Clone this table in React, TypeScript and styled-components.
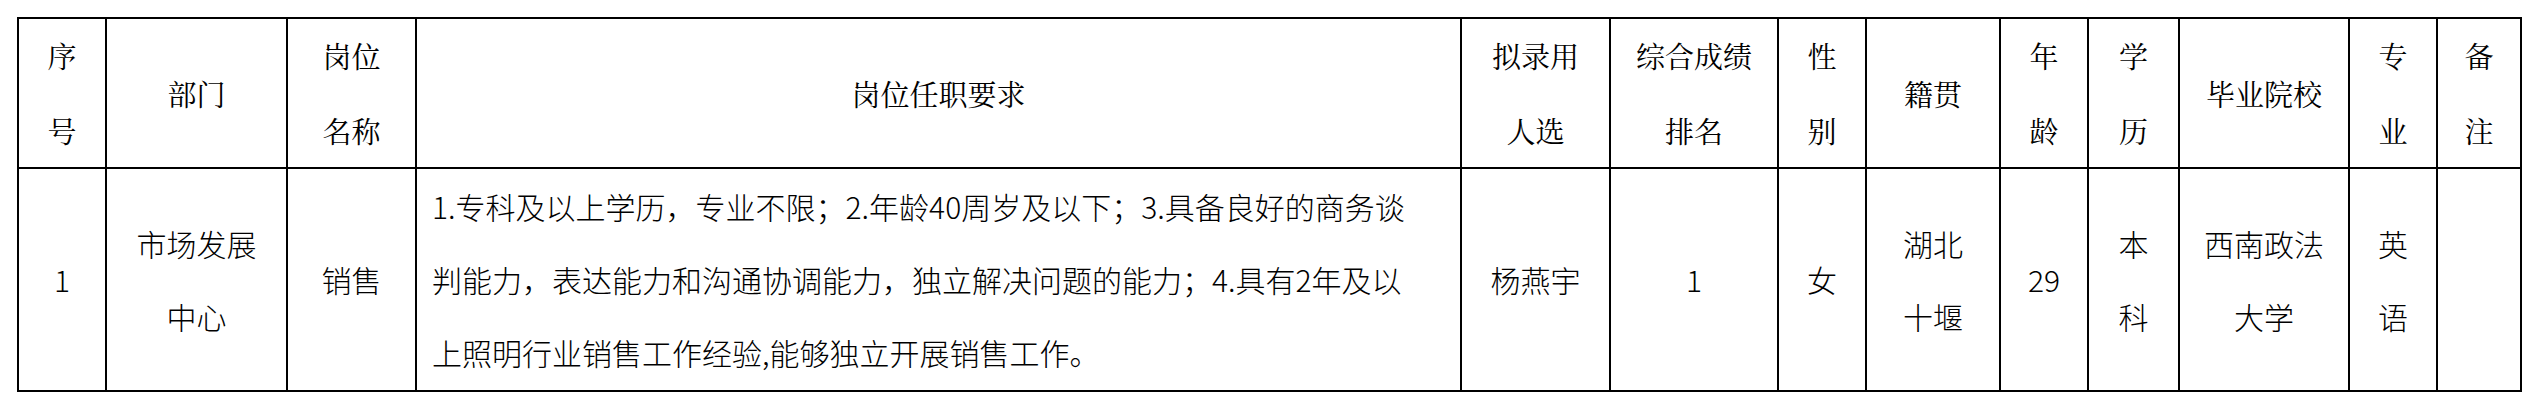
import styled, { createGlobalStyle } from 'styled-components';

const GlobalStyle = createGlobalStyle`
  html, body {
    margin: 0;
    padding: 0;
    background: #ffffff;
  }
`;

const Page = styled.div`
  padding: 17px;
  background: #ffffff;
`;

// grid with black background + 2px gaps draws the ruled lines
const Table = styled.div`
  display: grid;
  grid-template-columns: 86px 179px 127px 1043px 147px 166px 86px 132px 86px 89px 168px 86px 82px;
  grid-template-rows: 148px 221px;
  gap: 2px;
  padding: 2px;
  width: fit-content;
  background: #000000;
`;

const HeadCell = styled.div`
  display: flex;
  align-items: center;
  justify-content: center;
  text-align: center;
  background: #ffffff;
  color: #000000;
  font-family: 'Noto Serif CJK SC', 'AR PL UMing CN', 'Noto Sans CJK SC', serif;
  font-size: 29px;
  font-weight: 400;
  line-height: 75px;
  white-space: nowrap;
`;

const BodyCell = styled.div<{ $left?: boolean }>`
  display: flex;
  align-items: center;
  justify-content: ${({ $left }) => ($left ? 'flex-start' : 'center')};
  text-align: ${({ $left }) => ($left ? 'left' : 'center')};
  padding: ${({ $left }) => ($left ? '0 0 0 15px' : '0')};
  background: #ffffff;
  color: #000000;
  font-family: 'Noto Sans CJK SC', sans-serif;
  font-size: 30px;
  font-weight: 300;
  line-height: 73px;
  white-space: nowrap;
`;

const headers: string[][] = [
  ['序', '号'],
  ['部门'],
  ['岗位', '名称'],
  ['岗位任职要求'],
  ['拟录用', '人选'],
  ['综合成绩', '排名'],
  ['性', '别'],
  ['籍贯'],
  ['年', '龄'],
  ['学', '历'],
  ['毕业院校'],
  ['专', '业'],
  ['备', '注'],
];

const row: string[][] = [
  ['1'],
  ['市场发展', '中心'],
  ['销售'],
  [
    '1.专科及以上学历，专业不限；2.年龄40周岁及以下；3.具备良好的商务谈',
    '判能力，表达能力和沟通协调能力，独立解决问题的能力；4.具有2年及以',
    '上照明行业销售工作经验,能够独立开展销售工作。',
  ],
  ['杨燕宇'],
  ['1'],
  ['女'],
  ['湖北', '十堰'],
  ['29'],
  ['本', '科'],
  ['西南政法', '大学'],
  ['英', '语'],
  [],
];

const Lines = ({ lines }: { lines: string[] }) => (
  <div>
    {lines.map((l, i) => (
      <div key={i}>{l}</div>
    ))}
  </div>
);

export default function App() {
  return (
    <>
      <GlobalStyle />
      <Page>
        <Table>
          {headers.map((h, i) => (
            <HeadCell key={'h' + i}>
              <Lines lines={h} />
            </HeadCell>
          ))}
          {row.map((c, i) => (
            <BodyCell key={'b' + i} $left={i === 3}>
              <Lines lines={c} />
            </BodyCell>
          ))}
        </Table>
      </Page>
    </>
  );
}
